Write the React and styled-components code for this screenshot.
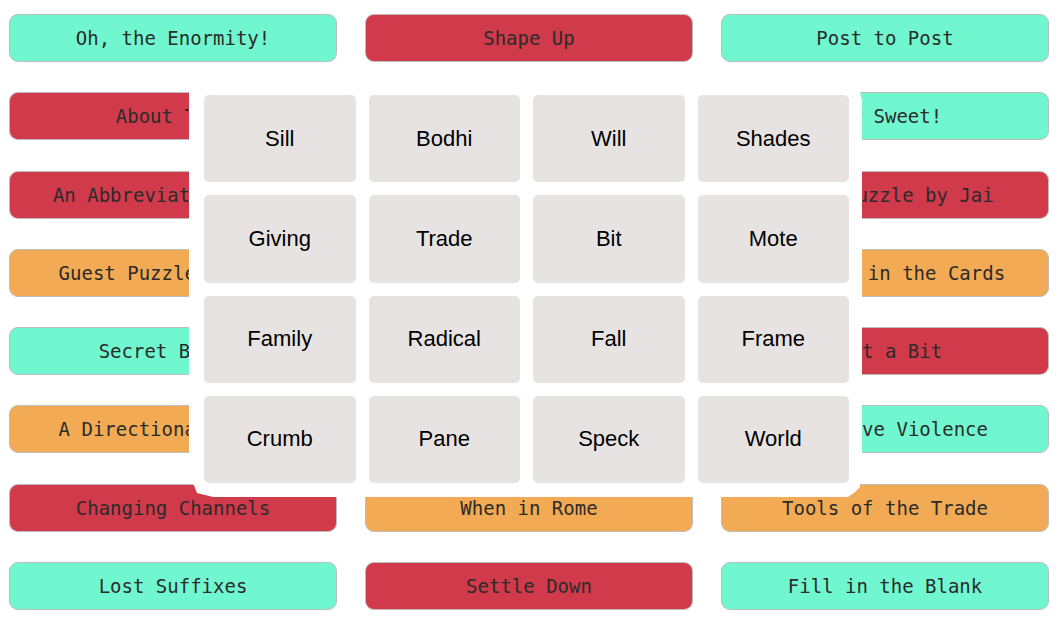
import React from "react";
import styled, { createGlobalStyle } from "styled-components";

const GlobalStyle = createGlobalStyle`
  *, *::before, *::after { box-sizing: border-box; }
  body { margin: 0; background: #fff; }
`;

const tones = {
  mint: "#71f7cf",
  red: "#d13a4a",
  orange: "#f2aa54",
};

const Page = styled.div`
  position: relative;
  min-height: 100vh;
  overflow: hidden;
`;

const PuzzleGrid = styled.main`
  display: grid;
  grid-template-columns: repeat(3, 1fr);
  column-gap: 28px;
  row-gap: 30px;
  align-content: space-between;
  min-height: 100vh;
  padding: 14px 14px 21px 9px;
`;

const PuzzleButton = styled.button`
  grid-column: ${({ $column }) => $column};
  height: 48px;
  padding: 0;
  border: 1px solid #bdbdbd;
  border-radius: 9px;
  background: ${({ $tone }) => tones[$tone]};
  color: #2b2b2b;
  font-family: "DejaVu Sans Mono", monospace;
  font-size: 19px;
  line-height: 24px;
  white-space: nowrap;
  cursor: pointer;
`;

/* The word board floats over the puzzle list. */
const Board = styled.section`
  position: absolute;
  top: 79px;
  left: 189px;
  right: 201px;
  height: 418px;
  display: grid;
  grid-template-columns: repeat(4, 1fr);
  grid-template-rows: repeat(4, 1fr);
  gap: 13px;
  padding: 16px 13px 14px 15px;
  background: #fff;
  clip-path: polygon(
    0 0,
    calc(100% - 6px) 0,
    calc(100% - 2px) 13px,
    100% 22px,
    100% calc(100% - 22px),
    calc(100% - 2px) calc(100% - 14px),
    calc(100% - 2px) calc(100% - 10px),
    calc(100% - 7px) calc(100% - 5px),
    calc(100% - 14px) 100%,
    24px 100%,
    8px calc(100% - 4px),
    4px calc(100% - 14px),
    0 calc(100% - 26px)
  );
`;

const WordTile = styled.button`
  padding: 0;
  border: 0;
  border-radius: 5px;
  background: #e7e3e2;
  color: #000;
  font-family: "Liberation Sans", Arial, sans-serif;
  font-size: 22px;
  line-height: 26px;
  cursor: pointer;
`;

const puzzles = [
  { column: 1, tone: "mint", title: "Oh, the Enormity!" },
  { column: 2, tone: "red", title: "Shape Up" },
  { column: 3, tone: "mint", title: "Post to Post" },
  { column: 1, tone: "red", title: "About Time" },
  { column: 3, tone: "mint", title: "How Sweet!" },
  { column: 1, tone: "red", title: "An Abbreviated Puzzle" },
  { column: 3, tone: "red", title: "Guest Puzzle by Jai" },
  { column: 1, tone: "orange", title: "Guest Puzzle by Jess" },
  { column: 3, tone: "orange", title: "It's All in the Cards" },
  { column: 1, tone: "mint", title: "Secret Bakers" },
  { column: 3, tone: "red", title: "Wait a Bit" },
  { column: 1, tone: "orange", title: "A Directional Puzzle" },
  { column: 3, tone: "mint", title: "Excessive Violence" },
  { column: 1, tone: "red", title: "Changing Channels" },
  { column: 2, tone: "orange", title: "When in Rome" },
  { column: 3, tone: "orange", title: "Tools of the Trade" },
  { column: 1, tone: "mint", title: "Lost Suffixes" },
  { column: 2, tone: "red", title: "Settle Down" },
  { column: 3, tone: "mint", title: "Fill in the Blank" },
];

const words = [
  "Sill", "Bodhi", "Will", "Shades",
  "Giving", "Trade", "Bit", "Mote",
  "Family", "Radical", "Fall", "Frame",
  "Crumb", "Pane", "Speck", "World",
];

export default function App() {
  return (
    <Page>
      <GlobalStyle />
      <PuzzleGrid>
        {puzzles.map(({ column, tone, title }) => (
          <PuzzleButton key={title} type="button" $column={column} $tone={tone}>
            {title}
          </PuzzleButton>
        ))}
      </PuzzleGrid>
      <Board>
        {words.map((word) => (
          <WordTile key={word} type="button">
            {word}
          </WordTile>
        ))}
      </Board>
    </Page>
  );
}
